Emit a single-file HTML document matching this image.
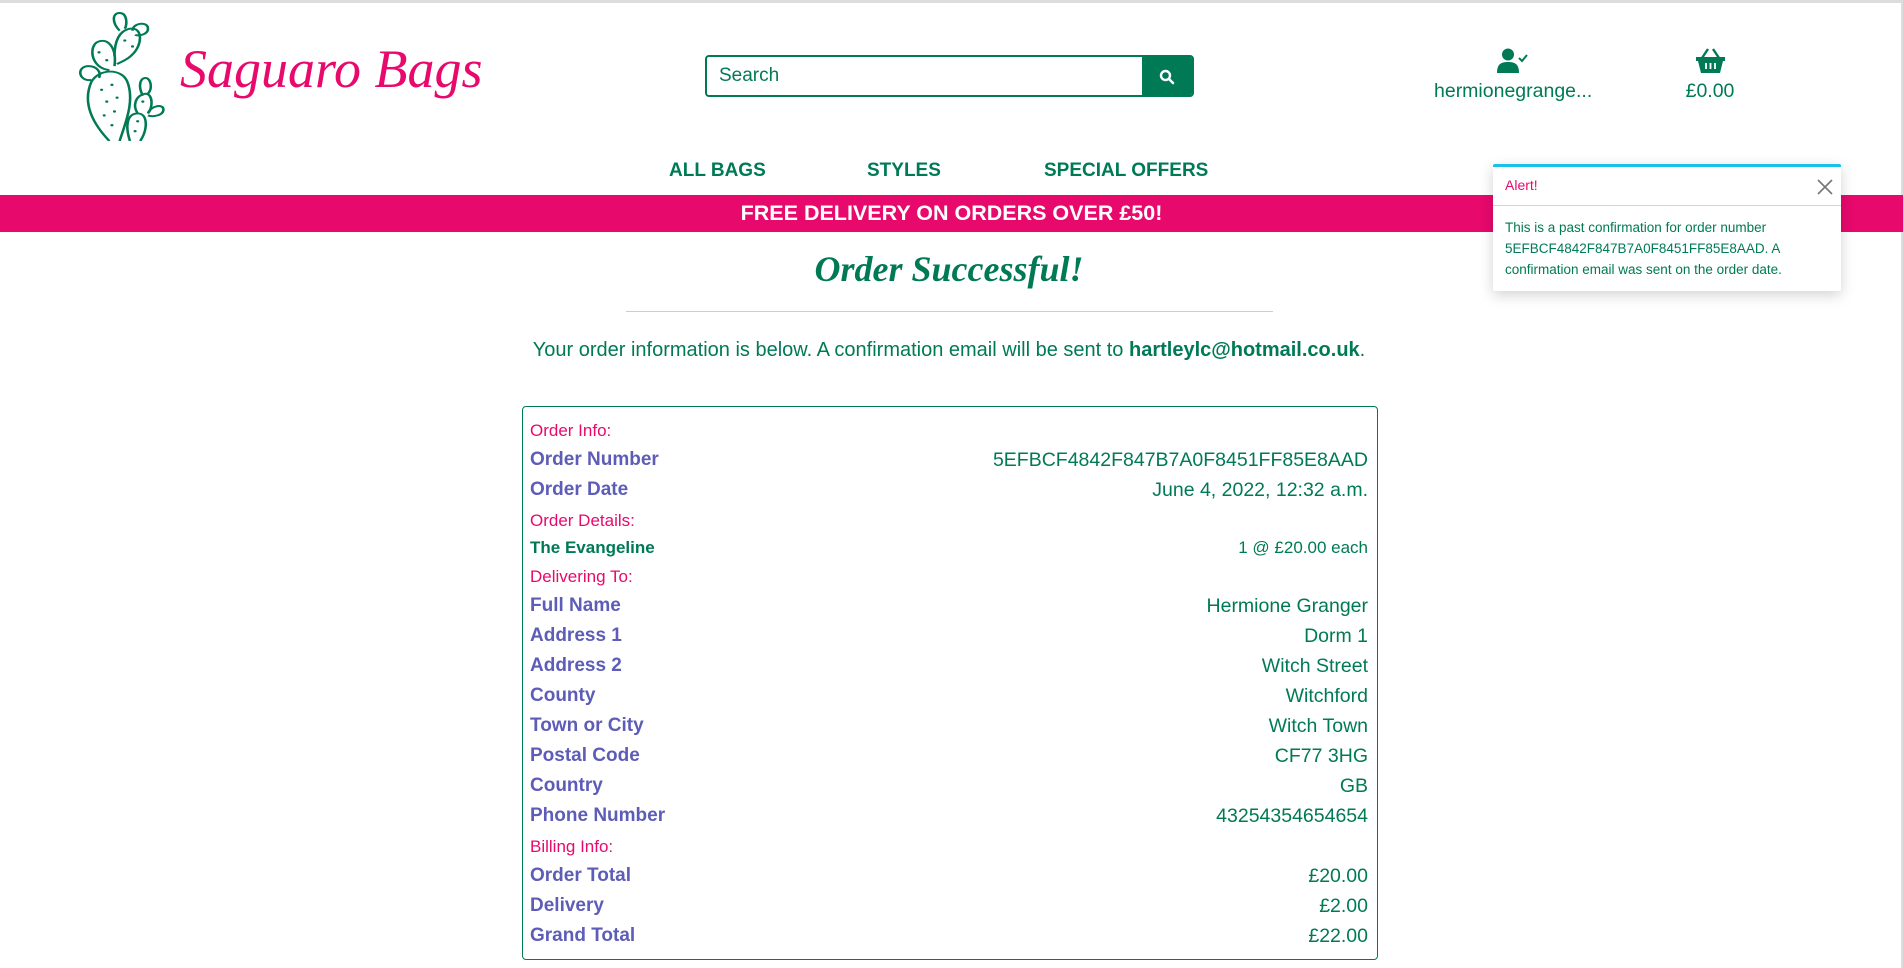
<!DOCTYPE html>
<html><head><meta charset="utf-8"><style>
*{margin:0;padding:0;box-sizing:border-box}
body{width:1903px;height:968px;overflow:hidden;background:#fff;font-family:"Liberation Sans",Arial,sans-serif;color:#007a55;position:relative}
.a{position:absolute;white-space:nowrap}
.row{position:absolute;left:530px;width:838px;display:flex;justify-content:space-between;align-items:center;height:30px}
.lab{color:#5d5db8;font-weight:bold;font-size:19px}
.val{color:#007a55;font-size:19.5px}
.sec{color:#e8096d;font-size:17px}
</style></head><body>
<div class="a" style="left:0;top:0;width:1903px;height:3px;background:#ddd"></div>
<div class="a" style="right:0;top:0;width:2px;height:968px;background:#ddd"></div>
<svg class="a" style="left:72px;top:11px" width="94" height="130" viewBox="-1 0 73 132" preserveAspectRatio="none" fill="none" stroke="#007a55" stroke-width="2">
<path d="M28 132 C12 110 8 90 14 72 C20 58 38 58 42 72 C48 92 40 115 36 132"/>
<path d="M14 70 C4 72 2 56 12 56 C18 56 22 62 20 68"/>
<path d="M28 60 C14 58 12 38 18 32 C26 26 34 36 32 56"/>
<path d="M32 46 C32 30 36 20 44 18 C54 16 54 34 46 44 C42 50 36 52 34 54"/>
<path d="M36 20 C30 12 30 2 36 2 C42 2 42 14 40 18"/>
<path d="M46 20 C46 12 58 10 58 18 C58 24 50 26 48 24"/>
<path d="M44 132 C40 116 42 104 50 104 C58 104 58 120 52 132"/>
<path d="M50 104 C46 96 48 86 56 84 C62 84 62 98 58 104"/>
<path d="M54 86 C50 76 52 68 56 68 C60 68 62 78 58 84"/>
<path d="M58 104 C60 96 70 94 70 100 C70 106 62 108 58 106"/>
<g fill="#007a55" stroke="none"><circle cx="22" cy="80" r="1.2"/><circle cx="30" cy="75" r="1.2"/><circle cx="26" cy="92" r="1.2"/><circle cx="34" cy="88" r="1.2"/><circle cx="24" cy="106" r="1.2"/><circle cx="32" cy="102" r="1.2"/><circle cx="30" cy="116" r="1.2"/><circle cx="20" cy="42" r="1.2"/><circle cx="26" cy="50" r="1.2"/><circle cx="40" cy="30" r="1.2"/><circle cx="46" cy="36" r="1.2"/><circle cx="50" cy="112" r="1.2"/><circle cx="48" cy="122" r="1.2"/><circle cx="54" cy="92" r="1.2"/></g>
</svg>
<div class="a" style="left:180px;top:38px;font-family:'Liberation Serif',serif;font-style:italic;font-size:54px;color:#e8096d">Saguaro Bags</div>
<div class="a" style="left:705px;top:55px;width:489px;height:42px;border:2px solid #007a55;border-radius:4px;overflow:hidden">
<div class="a" style="left:12px;top:8px;font-size:19px;color:#007a55">Search</div>
<div class="a" style="right:0;top:0;width:50px;height:38px;background:#007a55">
<svg class="a" style="left:17px;top:12px" width="16" height="16" viewBox="0 0 16 16"><circle cx="6.5" cy="6.5" r="4.5" stroke="#fff" stroke-width="2.4" fill="none"/><path d="M10 10l4 4" stroke="#fff" stroke-width="2.6" stroke-linecap="round"/></svg></div></div>
<svg class="a" style="left:1497px;top:48px" width="32" height="26" viewBox="0 0 32 26"><circle cx="11" cy="6.5" r="6" fill="#007a55"/><path d="M0 25 C0 16 4 14 11 14 C18 14 22 16 22 25Z" fill="#007a55"/><path d="M22 10l3 3 5-6" stroke="#007a55" stroke-width="2" fill="none"/></svg>
<div class="a" style="left:1434px;top:80px;width:156px;text-align:center;font-size:19.5px">hermionegrange...</div>
<svg class="a" style="left:1696px;top:48px" width="29" height="26" viewBox="0 0 29 26"><path d="M6 10L12 1M23 10L17 1" stroke="#007a55" stroke-width="2.4"/><path d="M0 9h29v4h-2l-3 12H5L2 13H0z" fill="#007a55"/><path d="M10 15v6M14.5 15v6M19 15v6" stroke="#fff" stroke-width="1.8"/></svg>
<div class="a" style="left:1660px;top:80px;width:100px;text-align:center;font-size:19.5px">£0.00</div>
<div class="a" style="left:669px;top:160px;font-size:19px;font-weight:bold">ALL BAGS</div>
<div class="a" style="left:867px;top:160px;font-size:19px;font-weight:bold">STYLES</div>
<div class="a" style="left:1044px;top:160px;font-size:19px;font-weight:bold">SPECIAL OFFERS</div>
<div class="a" style="left:0;top:195px;width:1903px;height:37px;background:#e8096d;color:#fff;font-weight:bold;font-size:21.5px;text-align:center;line-height:37px">FREE DELIVERY ON ORDERS OVER £50!</div>
<div class="a" style="left:1493px;top:164px;width:348px;height:127px;background:#fff;border-top:3px solid #17c1e8;box-shadow:0 4px 14px rgba(0,0,0,.18);border-radius:2px">
<div class="a" style="left:12px;top:10px;color:#e8096d;font-size:14px">Alert!</div>
<svg class="a" style="right:8px;top:12px" width="16" height="16" viewBox="0 0 16 16"><path d="M1 1l14 14M15 1L1 15" stroke="#777" stroke-width="1.6"/></svg>
<div class="a" style="left:0;top:38px;width:348px;height:1px;background:#e6c9d2"></div>
<div class="a" style="left:12px;top:50px;font-size:13.5px;line-height:21px;white-space:normal;width:330px">This is a past confirmation for order number 5EFBCF4842F847B7A0F8451FF85E8AAD. A confirmation email was sent on the order date.</div></div>
<div class="a" style="left:549px;top:248px;width:800px;text-align:center;font-family:'Liberation Serif',serif;font-style:italic;font-weight:bold;font-size:36px">Order Successful!</div>
<div class="a" style="left:626px;top:311px;width:647px;height:1px;background:#b7d9cb"></div>
<div class="a" style="left:349px;top:339px;width:1200px;text-align:center;font-size:20px">Your order information is below. A confirmation email will be sent to <b>hartleylc@hotmail.co.uk</b>.</div>
<div class="a" style="left:522px;top:406px;width:856px;height:554px;border:1.5px solid #007a55;border-radius:4px"></div>
<div class="row" style="top:416px"><span class="sec">Order Info:</span></div>
<div class="row" style="top:445px"><span class="lab">Order Number</span><span class="val">5EFBCF4842F847B7A0F8451FF85E8AAD</span></div>
<div class="row" style="top:475px"><span class="lab">Order Date</span><span class="val">June 4, 2022, 12:32 a.m.</span></div>
<div class="row" style="top:506px"><span class="sec">Order Details:</span></div>
<div class="row" style="top:533px"><span style="font-weight:bold;font-size:17px">The Evangeline</span><span style="font-size:17px">1 @ £20.00 each</span></div>
<div class="row" style="top:562px"><span class="sec">Delivering To:</span></div>
<div class="row" style="top:591px"><span class="lab">Full Name</span><span class="val">Hermione Granger</span></div>
<div class="row" style="top:621px"><span class="lab">Address 1</span><span class="val">Dorm 1</span></div>
<div class="row" style="top:651px"><span class="lab">Address 2</span><span class="val">Witch Street</span></div>
<div class="row" style="top:681px"><span class="lab">County</span><span class="val">Witchford</span></div>
<div class="row" style="top:711px"><span class="lab">Town or City</span><span class="val">Witch Town</span></div>
<div class="row" style="top:741px"><span class="lab">Postal Code</span><span class="val">CF77 3HG</span></div>
<div class="row" style="top:771px"><span class="lab">Country</span><span class="val">GB</span></div>
<div class="row" style="top:801px"><span class="lab">Phone Number</span><span class="val">43254354654654</span></div>
<div class="row" style="top:832px"><span class="sec">Billing Info:</span></div>
<div class="row" style="top:861px"><span class="lab">Order Total</span><span class="val">£20.00</span></div>
<div class="row" style="top:891px"><span class="lab">Delivery</span><span class="val">£2.00</span></div>
<div class="row" style="top:921px"><span class="lab">Grand Total</span><span class="val">£22.00</span></div>
</body></html>
